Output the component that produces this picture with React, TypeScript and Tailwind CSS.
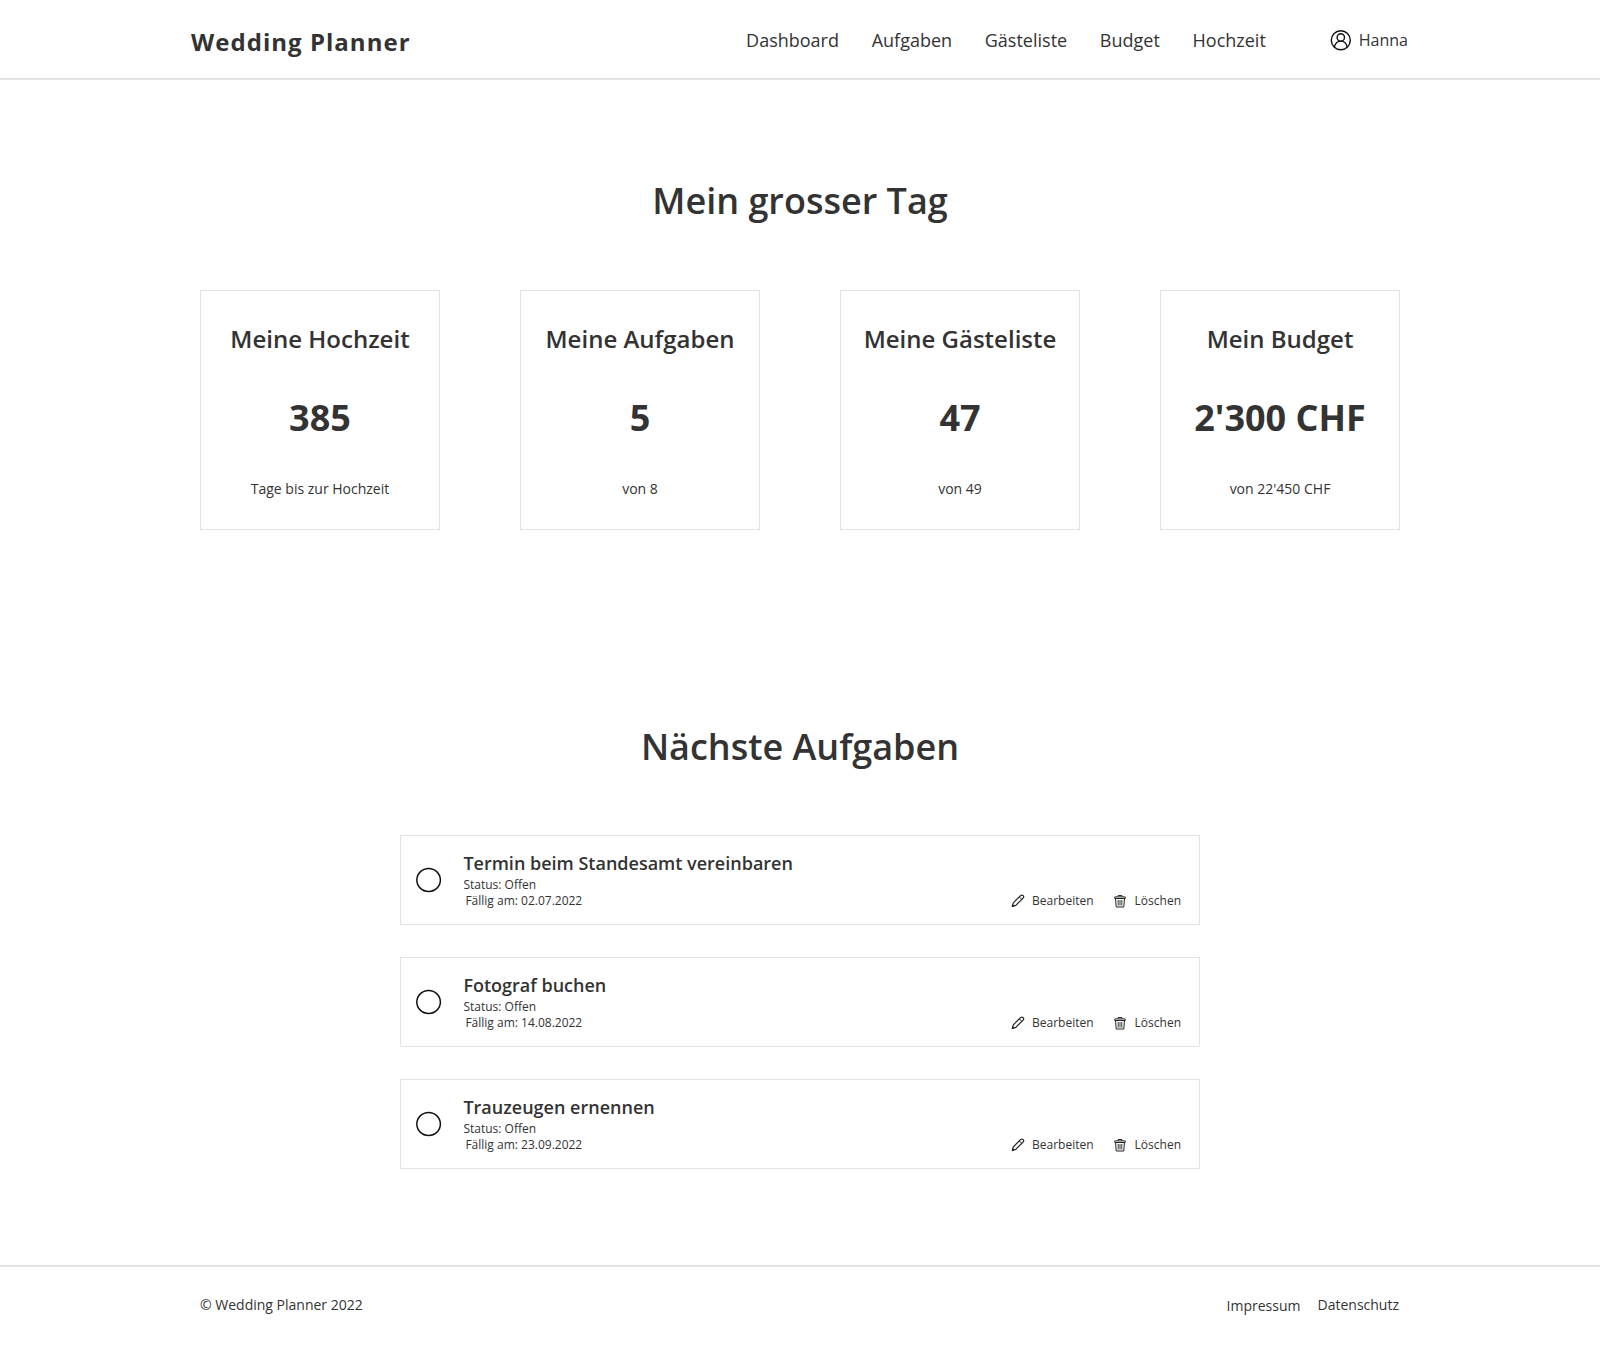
const cards = [
  ["Meine Hochzeit", "385", "Tage bis zur Hochzeit"],
  ["Meine Aufgaben", "5", "von 8"],
  ["Meine Gästeliste", "47", "von 49"],
  ["Mein Budget", "2'300 CHF", "von 22'450 CHF"],
];
const tasks = [
  ["Termin beim Standesamt vereinbaren", "02.07.2022"],
  ["Fotograf buchen", "14.08.2022"],
  ["Trauzeugen ernennen", "23.09.2022"],
];

function UserIcon() {
  return (
    <svg width="21" height="21" viewBox="0 0 21 21" fill="none" stroke="#111" strokeWidth="1.4">
      <circle cx="10.8" cy="10.2" r="9.5" />
      <circle cx="10.8" cy="7.4" r="3.7" />
      <path d="M4.300 17c.9-3.300 3.300-5.900 6.500-5.900s5.600 2.600 6.500 5.900" />
    </svg>
  );
}

function PencilIcon() {
  return (
    <svg width="14" height="14" viewBox="0 0 14 14" fill="none" stroke="#222" strokeWidth="1.2" strokeLinejoin="round">
      <path d="M1.300 12.500l1-3.600 7.300-7.300c.8-.7 1.800-.7 2.500 0s.7 1.800 0 2.500l-7.300 7.300z" />
      <path d="M8.300 2.900l2.500 2.500" strokeWidth="1" />
      <path d="M1.300 12.500l.6-1.900 1.300 1.300z" fill="#222" strokeWidth=".6" />
    </svg>
  );
}

function TrashIcon() {
  return (
    <svg width="12" height="13" viewBox="0 0 12 13" fill="none" stroke="#222" strokeWidth="1">
      <path d="M4 1.500V.6h4v.9" />
      <path d="M.8 3.500V1.900h10.400v1.600z" />
      <path d="M1.600 3.800l.6 8.200h7.600l.6-8.200" />
      <path d="M4.200 5v5.500M6 5v5.500M7.800 5v5.500" strokeWidth=".9" />
    </svg>
  );
}

export default function App() {
  return (
    <div className="flex h-[1346px] flex-col bg-white font-['Open_Sans',sans-serif] text-[#333333]">
      <header className="flex h-20 shrink-0 items-center border-b-2 border-[#e4e4e4] pt-0.5 pr-[192px] pl-[191px]">
        <div className="pt-1 text-2xl font-bold tracking-[1.03px]">Wedding Planner</div>
        <nav className="ml-auto flex gap-[32.7px] text-lg">
          <a>Dashboard</a>
          <a>Aufgaben</a>
          <a>Gästeliste</a>
          <a>Budget</a>
          <a>Hochzeit</a>
        </nav>
        <div className="ml-16 flex items-center gap-2 text-base">
          <UserIcon />
          Hanna
        </div>
      </header>
      <main>
        <h1 className="mt-24 text-center text-4xl leading-[50px] font-semibold">Mein grosser Tag</h1>
        <div className="mx-[200px] mt-16 flex justify-between">
          {cards.map(([title, value, note]) => (
            <div key={title} className="flex h-60 w-60 flex-col items-center border border-[#e2e2e2] pt-8">
              <h2 className="text-2xl leading-8 font-semibold">{title}</h2>
              <p className="mt-[38px] text-4xl leading-[50px] font-bold">{value}</p>
              <p className="mt-9 text-sm">{note}</p>
            </div>
          ))}
        </div>
        <h1 className="mt-48 text-center text-4xl leading-[50px] font-semibold">Nächste Aufgaben</h1>
        <div className="mx-auto mt-[63px] flex w-[800px] flex-col gap-8">
          {tasks.map(([title, due]) => (
            <div key={title} className="flex h-[90px] border border-[#e2e2e2]">
              <svg className="mt-[31px] ml-[15px]" width="26" height="26" viewBox="0 0 26 26" fill="none">
                <ellipse cx="12.600" cy="13" rx="11.800" ry="11.500" stroke="#111" strokeWidth="1.500" />
              </svg>
              <div className="ml-[21.4px] pt-[15px] text-xs leading-4">
                <h3 className="mb-px text-lg leading-[25px] font-semibold">{title}</h3>
                <p>Status: Offen</p>
                <p className="ml-0.5">Fällig am: {due}</p>
              </div>
              <div className="mr-[18px] mb-[15px] ml-auto flex items-end text-xs leading-4">
                <div className="flex items-center gap-[7px]">
                  <PencilIcon />
                  Bearbeiten
                </div>
                <div className="ml-5 flex items-center gap-[9px]">
                  <TrashIcon />
                  Löschen
                </div>
              </div>
            </div>
          ))}
        </div>
      </main>
      <footer className="mt-24 flex h-[82px] items-center border-t-2 border-[#e4e4e4] pr-[201px] pl-[200px] text-sm leading-5">
        <span className="-mt-1">© Wedding Planner 2022</span>
        <a className="-mt-0.5 ml-auto">Impressum</a>
        <a className="-mt-1 ml-[17px]">Datenschutz</a>
      </footer>
    </div>
  );
}
